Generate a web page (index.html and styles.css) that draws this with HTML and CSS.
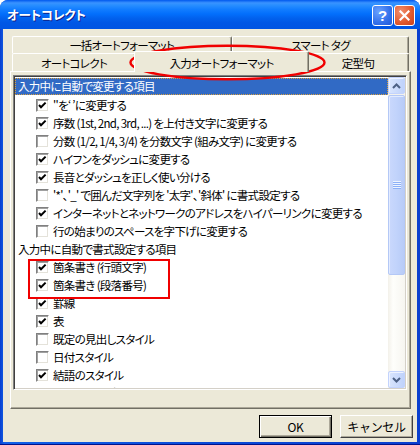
FILE: index.html
```html
<!DOCTYPE html>
<html lang="ja">
<head>
    <meta charset="UTF-8">
    <title>オートコレクト</title>
    <link rel="stylesheet" href="styles.css">
</head>
<body>
    <div class="window">
        <div class="titlebar">
            <span class="title">オートコレクト</span>
            <div class="tb-buttons">
                <span class="tb-btn help">?</span>
                <span class="tb-btn close">
                    <svg width="11" height="11" viewBox="0 0 11 11"><path d="M1.5 1.5 L9.5 9.5 M9.5 1.5 L1.5 9.5" stroke="#fff" stroke-width="2.2" stroke-linecap="square"/></svg>
                </span>
            </div>
        </div>

        <div class="client">
            <div class="tabs">
                <div class="tab-row">
                    <div class="tab tab-batch">一括オートフォーマット</div>
                    <div class="tab tab-smart">スマート タグ</div>
                </div>
                <div class="tab-row">
                    <div class="tab tab-auto">オートコレクト</div>
                    <div class="tab tab-input selected">入力オートフォーマット</div>
                    <div class="tab tab-text">定型句</div>
                </div>
            </div>

            <div class="panel">
                <div class="listbox">
                    <div class="list">
                        <div class="heading active">入力中に自動で変更する項目</div>
                        <div class="row"><span class="check on"></span><span class="label">''を‘ ’に変更する</span></div>
                        <div class="row"><span class="check on"></span><span class="label">序数 (1st, 2nd, 3rd, ...) を上付き文字に変更する</span></div>
                        <div class="row"><span class="check"></span><span class="label">分数 (1/2, 1/4, 3/4) を分数文字 (組み文字) に変更する</span></div>
                        <div class="row"><span class="check on"></span><span class="label">ハイフンをダッシュに変更する</span></div>
                        <div class="row"><span class="check on"></span><span class="label">長音とダッシュを正しく使い分ける</span></div>
                        <div class="row"><span class="check"></span><span class="label">'*'、'_' で囲んだ文字列を '太字'、'斜体' に書式設定する</span></div>
                        <div class="row"><span class="check on"></span><span class="label">インターネットとネットワークのアドレスをハイパーリンクに変更する</span></div>
                        <div class="row"><span class="check"></span><span class="label">行の始まりのスペースを字下げに変更する</span></div>
                        <div class="heading">入力中に自動で書式設定する項目</div>
                        <div class="marked">
                            <div class="row"><span class="check on"></span><span class="label">箇条書き (行頭文字)</span></div>
                            <div class="row"><span class="check on"></span><span class="label">箇条書き (段落番号)</span></div>
                        </div>
                        <div class="row"><span class="check on"></span><span class="label">罫線</span></div>
                        <div class="row"><span class="check on"></span><span class="label">表</span></div>
                        <div class="row"><span class="check"></span><span class="label">既定の見出しスタイル</span></div>
                        <div class="row"><span class="check"></span><span class="label">日付スタイル</span></div>
                        <div class="row"><span class="check on"></span><span class="label">結語のスタイル</span></div>
                        <div class="heading">入力中に自動で行う処理</div>
                    </div>
                    <div class="scrollbar">
                        <div class="sb-btn">
                            <svg width="9" height="6" viewBox="0 0 9 6"><path d="M1 5 L4.5 1.5 L8 5" fill="none" stroke="#4d6185" stroke-width="2"/></svg>
                        </div>
                        <div class="sb-thumb"><span class="grip"></span></div>
                        <div class="sb-track"></div>
                        <div class="sb-btn">
                            <svg width="9" height="6" viewBox="0 0 9 6"><path d="M1 1 L4.5 4.5 L8 1" fill="none" stroke="#4d6185" stroke-width="2"/></svg>
                        </div>
                    </div>
                </div>
            </div>

            <div class="buttons">
                <button class="btn default">OK</button>
                <button class="btn">キャンセル</button>
            </div>
        </div>

        <!-- red ellipse drawn over the tab -->
        <svg class="ellipse" width="199" height="37" viewBox="0 0 199 37">
            <ellipse cx="99.5" cy="18.5" rx="97" ry="16.8" fill="none" stroke="#f00000" stroke-width="2.4"/>
        </svg>
    </div>
</body>
</html>
```

FILE: styles.css
```css
* {
    margin: 0;
    padding: 0;
    box-sizing: border-box;
}

body {
    width: 420px;
    height: 445px;
    overflow: hidden;
    font-family: "Noto Sans CJK JP", "Noto Sans", sans-serif;
    font-size: 11.5px;
    font-feature-settings: "palt";
    letter-spacing: -0.7px;
    color: #000;
}

.window {
    position: relative;
    width: 420px;
    height: 445px;
    display: flex;
    flex-direction: column;
    background: linear-gradient(to right, #0a3fcf, #1160e8 1%, #0a4ad8 50%, #0a3fcf);
    border-radius: 8px 8px 0 0;
    border-bottom: 1px solid #00138c;
}

.titlebar {
    height: 29px;
    flex: none;
    display: flex;
    align-items: center;
    justify-content: space-between;
    padding: 0 5px 0 7px;
    border-radius: 8px 8px 0 0;
    background: linear-gradient(to bottom, #0058ee 0%, #3a93ff 10%, #288eff 18%, #127dff 32%, #036ffc 48%, #0262ee 62%, #0057e5 78%, #0054e3 100%);
}

.title {
    color: #fff;
    font-weight: bold;
    font-size: 12.5px;
    letter-spacing: -0.2px;
    text-shadow: 1px 1px #0f1e8a;
}

.tb-buttons {
    display: flex;
    gap: 1px;
    margin-top: 1px;
}

.tb-btn {
    width: 21px;
    height: 21px;
    border: 1px solid #fff;
    border-radius: 3px;
    display: flex;
    align-items: center;
    justify-content: center;
    color: #fff;
    font-family: "Liberation Sans", sans-serif;
    font-weight: bold;
    font-size: 15px;
    letter-spacing: 0;
}

.help {
    background: radial-gradient(circle at 30% 30%, #6aa2ff, #3370ea 60%, #2258d8);
}

.close {
    background: radial-gradient(circle at 30% 30%, #f28f6e, #e0582c 60%, #c8401c);
}

.client {
    flex: 1;
    margin: 0 3px 2px 3px;
    background: #ece9d8;
    display: flex;
    flex-direction: column;
}

/* tabs */
.tabs {
    margin: 7px 0 0 9px;
    width: 397px;
}

.tab-row {
    display: flex;
}

.tab-row:first-child .tab {
    height: 17px;
}

.tab {
    height: 18px;
    display: flex;
    align-items: center;
    justify-content: center;
    background: #ece9d8;
    border-top: 1px solid #fff;
    border-left: 1px solid #fff;
    border-right: 1px solid #716f64;
    box-shadow: inset -1px 0 #aca899;
    border-radius: 2px 2px 0 0;
}

.tab-batch { width: 220px; }
.tab-smart { width: 177px; }
.tab-auto { width: 124px; }
.tab-input { width: 171px; }
.tab-text { width: 102px; }

.tab.selected {
    position: relative;
    z-index: 1;
    width: 175px;
    height: 21px;
    margin: -2px -2px -1px -2px;
    padding-top: 1px;
}

.panel {
    margin-left: 7px;
    width: 401px;
    height: 338px;
    padding: 3px 0 0 2px;
    border-top: 1px solid #fff;
    border-left: 1px solid #fff;
    border-right: 1px solid #716f64;
    border-bottom: 1px solid #716f64;
    box-shadow: inset -1px -1px #aca899;
}

.listbox {
    width: 394px;
    height: 315px;
    display: flex;
    background: #fff;
    border-top: 1px solid #808080;
    border-left: 1px solid #808080;
    border-right: 1px solid #fff;
    border-bottom: 1px solid #fff;
    box-shadow: inset 1px 1px #404040, inset -1px -1px #d4d0c8;
    padding: 1px;
}

.list {
    flex: 1;
    overflow: hidden;
    padding-top: 1px;
}

.heading {
    height: 18px;
    line-height: 18px;
    padding-left: 3px;
    white-space: nowrap;
}

.heading.active {
    height: 17px;
    line-height: 15px;
    margin-bottom: 1px;
    padding-left: 2px;
    color: #fff;
    background: #316ac5;
    border: 1px dotted #d8a040;
}

.row {
    height: 18px;
    display: flex;
    align-items: center;
    white-space: nowrap;
}

.check {
    width: 13px;
    height: 13px;
    flex: none;
    margin-left: 21px;
    background: #fff;
    border-top: 1px solid #808080;
    border-left: 1px solid #808080;
    border-right: 1px solid #fff;
    border-bottom: 1px solid #fff;
    box-shadow: inset 1px 1px #a0a0a0, inset -1px -1px #e4e2da;
}

.check.on {
    background: #fff url("data:image/svg+xml;utf8,<svg xmlns='http://www.w3.org/2000/svg' width='11' height='11' viewBox='0 0 11 11'><path d='M2 5 L4 7.2 L8.6 2.6' fill='none' stroke='black' stroke-width='2'/></svg>") no-repeat 0 0;
}

.label {
    margin-left: 4px;
}

.marked {
    position: relative;
}

.marked::after {
    content: "";
    position: absolute;
    left: 13px;
    top: 1px;
    width: 138px;
    height: 36px;
    border: 2px solid #f00000;
}

/* scrollbar */
.scrollbar {
    width: 17px;
    flex: none;
    display: flex;
    flex-direction: column;
    background: #f3f2ec;
}

.sb-btn {
    height: 17px;
    flex: none;
    display: flex;
    align-items: center;
    justify-content: center;
    border: 1px solid #c3d3fd;
    border-radius: 2px;
    background: linear-gradient(to right, #d9e5fd, #bfd2fb);
    box-shadow: inset 1px 1px #eef3ff;
}

.sb-thumb {
    height: 180px;
    flex: none;
    margin-top: 1px;
    display: flex;
    align-items: center;
    justify-content: center;
    border: 1px solid #b4c8f6;
    border-radius: 2px;
    background: linear-gradient(to right, #cad8fc, #c1d3fb 50%, #b8cbf7);
    box-shadow: inset 1px 1px #e2ebff;
}

.grip {
    width: 8px;
    height: 8px;
    background: repeating-linear-gradient(to bottom, #eef4fe 0, #eef4fe 1px, #8cb0f8 1px, #8cb0f8 2px);
}

.sb-track {
    flex: 1;
    background: linear-gradient(to right, #f3f1ea, #fefefb 30%, #f6f5f0);
}

/* bottom buttons */
.buttons {
    display: flex;
    justify-content: flex-end;
    gap: 8px;
    margin: 6px 4px 0 0;
}

.btn {
    width: 73px;
    height: 23px;
    font-family: inherit;
    font-size: 12px;
    letter-spacing: -0.3px;
    background: #ece9d8;
    border-top: 1px solid #fff;
    border-left: 1px solid #fff;
    border-right: 1px solid #404040;
    border-bottom: 1px solid #404040;
    box-shadow: inset -1px -1px #aca899;
}

.btn.default {
    border: 1px solid #000;
    box-shadow: inset 1px 1px #fff, inset -1px -1px #716f64, inset -2px -2px #aca899;
}

.ellipse {
    position: absolute;
    left: 128px;
    top: 44px;
}
```
